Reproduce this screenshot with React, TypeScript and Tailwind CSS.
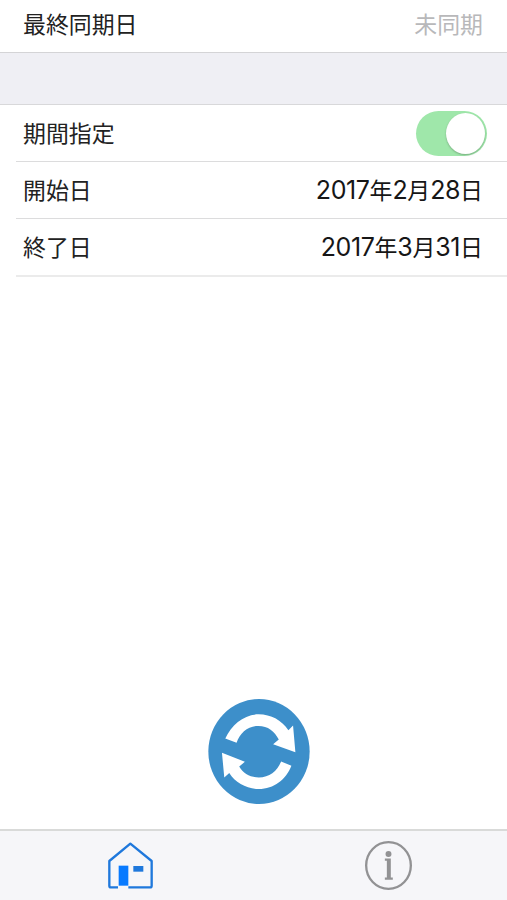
import { useState } from "react";
import type { ReactNode } from "react";

interface RowProps {
  label: string;
  children: ReactNode;
}

function Row({ label, children }: RowProps) {
  return (
    <div className="ml-4 flex h-[57px] items-center justify-between border-b border-[#dcdcdd] pl-[7px] pr-6 last:h-[58px] last:border-b-2 last:border-[#ebebeb]">
      <span className="pt-0.5">{label}</span>
      {children}
    </div>
  );
}

// Digits are set a little larger than the kanji around them
function DateText({ value }: { value: string }) {
  return (
    <span className="pt-0.5 text-[#161616]">
      {value.split(/(\d+)/).map((part, i) =>
        /\d/.test(part) ? (
          <span key={i} className="text-[25px] leading-[0] tracking-[-0.4px]">
            {part}
          </span>
        ) : (
          part
        )
      )}
    </span>
  );
}

interface ToggleProps {
  checked: boolean;
  onChange: (value: boolean) => void;
}

function Toggle({ checked, onChange }: ToggleProps) {
  return (
    <button
      type="button"
      role="switch"
      aria-checked={checked}
      aria-label="期間指定"
      onClick={() => onChange(!checked)}
      className={`-mr-1 flex h-[45px] w-[71px] items-center rounded-full px-0.5 ${
        checked ? "justify-end bg-[#9fe7aa]" : "justify-start bg-[#e5e5ea]"
      }`}
    >
      <span className="h-[41px] w-[39px] rounded-[50%] bg-white shadow-[0_1px_2px_rgba(0,0,0,0.25)]" />
    </button>
  );
}

function SyncIcon() {
  return (
    <svg viewBox="0 0 305 316" className="h-[105px] w-[102px]" aria-hidden="true">
      <ellipse cx="152.5" cy="158" rx="152.5" ry="158" fill="#3d8fca" />
      <g fill="#fff">
        <path d="M51 119C70 77 108 46 151 46C189 46 222 65 241 94L255 80L262 160L195 136L212 122C200 97 179 81 151 81C120 81 95 102 85 132Z" />
        <path d="M250 201C234 243 197 271 152 271C117 271 81 253 63 223L48 236L41 162L110 189L93 203C105 224 127 236 152 236C184 236 208 217 219 188Z" />
      </g>
    </svg>
  );
}

function HomeIcon() {
  return (
    <svg viewBox="0 0 135 141" className="h-[47px] w-[45px]" aria-hidden="true">
      <path
        d="M30 136H9Q4 136 4 131V57L67 5L131 57V131Q131 136 126 136H61"
        fill="none"
        stroke="#1f78dc"
        strokeWidth="7"
        strokeLinejoin="round"
      />
      <rect x="32" y="71" width="29" height="60" fill="#087aff" />
      <rect x="76" y="72" width="30" height="17" fill="#1f78dc" />
    </svg>
  );
}

function InfoIcon() {
  return (
    <svg viewBox="0 0 142 148" className="h-[49px] w-[47px]" aria-hidden="true">
      <ellipse cx="71" cy="74" rx="67.5" ry="70.5" fill="none" stroke="#929294" strokeWidth="7" />
      <g fill="#929294">
        <circle cx="71" cy="39" r="9" />
        <path d="M60 53H78V110H84V117H60V110H66V60H60Z" />
      </g>
    </svg>
  );
}

export default function App() {
  const [useRange, setUseRange] = useState(true);

  return (
    <div className="flex h-[900px] w-[507px] flex-col overflow-hidden bg-white font-['Inter','Noto_Sans_CJK_JP',sans-serif] text-[22.9px] leading-none text-[#222]">
      <div className="flex h-[53px] items-center justify-between border-b border-[#d4d4d6] pb-0.5 pl-[23px] pr-6">
        <span>最終同期日</span>
        <span className="text-[#b8b8ba]">未同期</span>
      </div>
      <div className="h-[52px] border-b border-[#d8d8da] bg-[#efeff4]" />

      <div>
        <Row label="期間指定">
          <Toggle checked={useRange} onChange={setUseRange} />
        </Row>
        <Row label="開始日">
          <DateText value="2017年2月28日" />
        </Row>
        <Row label="終了日">
          <DateText value="2017年3月31日" />
        </Row>
      </div>

      <div className="flex flex-1 items-end justify-center pb-[25px] pl-[11px]">
        <button type="button" aria-label="同期">
          <SyncIcon />
        </button>
      </div>

      <nav className="flex h-[71px] items-start border-t-2 border-[#d9dad9] bg-[#f6f6f9]">
        <button type="button" aria-label="ホーム" className="flex w-[253px] justify-center pl-[7px] pt-[11px]">
          <HomeIcon />
        </button>
        <button type="button" aria-label="情報" className="flex w-[254px] justify-center pl-4 pt-2.5">
          <InfoIcon />
        </button>
      </nav>
    </div>
  );
}
